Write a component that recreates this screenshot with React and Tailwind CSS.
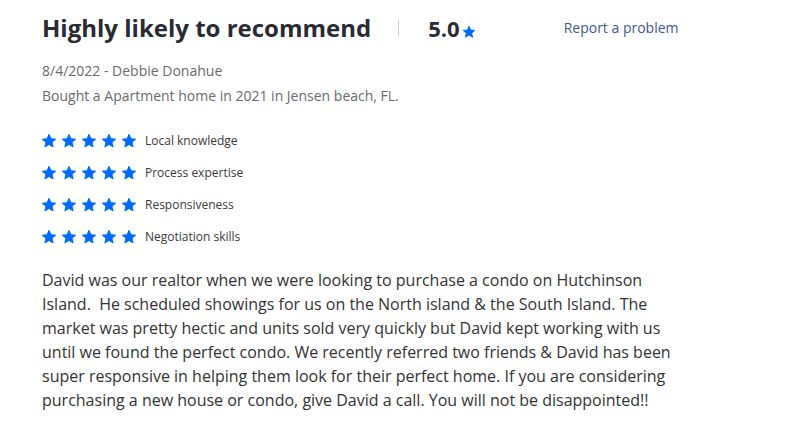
import React from "react";

const Star = ({ size = 16 }) => (
  <svg width={size} height={size} viewBox="0 0 24 24" fill="#006aff" stroke="#006aff" strokeWidth="1.5" strokeLinejoin="round">
    <path d="M12 17.27L18.18 21l-1.64-7.03L22 9.24l-7.19-.61L12 2 9.19 8.63 2 9.24l5.46 4.73L5.82 21z" />
  </svg>
);

const ratings = [
  "Local knowledge",
  "Process expertise",
  "Responsiveness",
  "Negotiation skills",
];

function App() {
  return (
    <div
      className="min-h-screen bg-white pl-[42px] pt-[12px]"
      style={{ fontFamily: "'Open Sans', sans-serif" }}
    >
      <div className="flex items-center">
        <h1 className="text-[24px] font-bold text-[#2a2a33] leading-[32px]">
          Highly likely to recommend
        </h1>
        <div className="ml-[27px] h-[16px] w-px bg-[#d1d1d5]"></div>
        <div className="ml-[29px] flex items-end">
          <span className="text-[22px] font-bold text-[#2a2a33] leading-[32px]">5.0</span>
          <span className="ml-[2px] mb-[5px]">
            <Star size={14} />
          </span>
        </div>
        <a className="ml-[88px] text-[14px] text-[#3e5a8a] leading-[20px] cursor-pointer">
          Report a problem
        </a>
      </div>

      <div className="mt-[14px] text-[14px] text-[#6b6b6b] leading-[25px]">
        <p>8/4/2022 - Debbie Donahue</p>
        <p>Bought a Apartment home in 2021 in Jensen beach, FL.</p>
      </div>

      <div className="mt-[24px] flex flex-col gap-[14px]">
        {ratings.map((r) => (
          <div key={r} className="flex items-center h-[18px]">
            <div className="flex gap-[4px] -ml-[1px]">
              {[0, 1, 2, 3, 4].map((i) => (
                <Star key={i} size={16} />
              ))}
            </div>
            <span className="ml-[8px] text-[12px] text-[#3a3a3a]">{r}</span>
          </div>
        ))}
      </div>

      <p className="mt-[22px] w-[640px] text-[16px] leading-[24px] text-[#333333]">
        David was our realtor when we were looking to purchase a condo on Hutchinson
        Island.&nbsp; He scheduled showings for us on the North island &amp; the South
        Island. The market was pretty hectic and units sold very quickly but David kept
        working with us until we found the perfect condo. We recently referred two
        friends &amp; David has been super responsive in helping them look for their
        perfect home. If you are considering purchasing a new house or condo, give David
        a call. You will not be disappointed!!
      </p>
    </div>
  );
}

export default App;
